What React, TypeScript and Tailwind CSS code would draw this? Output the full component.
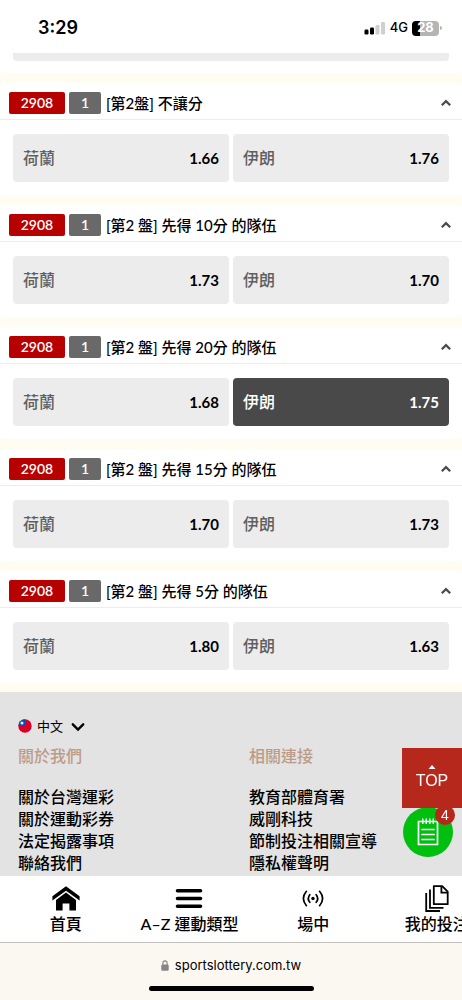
import { useState } from 'react';
import clsx from 'clsx';

interface Market {
  id: number;
  title: string;
  odds: [string, string];
}

const teams = ['荷蘭', '伊朗'];

const markets: Market[] = [
  { id: 1, title: '[第2盤] 不讓分', odds: ['1.66', '1.76'] },
  { id: 2, title: '[第2 盤] 先得 10分 的隊伍', odds: ['1.73', '1.70'] },
  { id: 3, title: '[第2 盤] 先得 20分 的隊伍', odds: ['1.68', '1.75'] },
  { id: 4, title: '[第2 盤] 先得 15分 的隊伍', odds: ['1.70', '1.73'] },
  { id: 5, title: '[第2 盤] 先得 5分 的隊伍', odds: ['1.80', '1.63'] },
];

const footerColumns = [
  { heading: '關於我們', links: ['關於台灣運彩', '關於運動彩券', '法定揭露事項', '聯絡我們'] },
  { heading: '相關連接', links: ['教育部體育署', '威剛科技', '節制投注相關宣導', '隱私權聲明'] },
];

function StatusBar() {
  return (
    <header className="flex h-[53px] items-start justify-between bg-white pt-4 pr-5 pl-[38px] font-['Inter','Liberation_Sans',sans-serif]">
      <span className="text-lg leading-6 font-semibold">3:29</span>
      <div className="flex h-6 items-center gap-1">
        <svg width="22" height="14" viewBox="0 0 22 14" aria-hidden="true">
          <rect x="0.5" y="8.5" width="4" height="5" rx="1.2" fill="#000" />
          <rect x="6" y="6.5" width="4" height="7" rx="1.2" fill="#000" />
          <rect x="11.5" y="4" width="4" height="9.500" rx="1.2" fill="#cfcfcf" />
          <rect x="17" y="1" width="4" height="12.500" rx="1.2" fill="#cfcfcf" />
        </svg>
        <span className="text-[13px] font-medium">4G</span>
        <div className="flex items-center gap-px">
          <span className="flex h-[15px] w-[27px] items-center justify-center rounded bg-linear-to-r from-black from-28% to-[#b4b4b4] to-28% text-[13px] font-bold text-white">
            28
          </span>
          <span className="h-1 w-0.5 rounded-r bg-[#b4b4b4]" />
        </div>
      </div>
    </header>
  );
}

function MarketCard({
  market,
  selected,
  onSelect,
}: {
  market: Market;
  selected: number | null;
  onSelect: (index: number) => void;
}) {
  const [open, setOpen] = useState(true);

  return (
    <section className="rounded bg-white">
      <button
        onClick={() => setOpen(!open)}
        aria-expanded={open}
        className="flex h-[37px] w-full items-center border-b border-[#ececf0] pt-1 pr-[11px] pl-[9px] text-left"
      >
        <span className="flex h-[22px] w-14 items-center justify-center rounded-xs bg-[#b70000] text-sm font-semibold text-white">
          2908
        </span>
        <span className="ml-1 flex h-[22px] w-8 items-center justify-center rounded-xs bg-[#696969] text-sm font-semibold text-white">
          1
        </span>
        <span className="ml-[5px] flex-1 text-[15px] leading-6 font-medium">{market.title}</span>
        <svg
          width="10"
          height="8"
          viewBox="0 0 10 8"
          fill="none"
          stroke="#4a4a4a"
          strokeWidth="2.2"
          className={clsx(!open && 'rotate-180')}
          aria-hidden="true"
        >
          <path d="M0.800 6.300 5 2.100 9.200 6.300" />
        </svg>
      </button>

      {open && (
        <div className="grid grid-cols-2 gap-1 px-[13px] pt-3.5 pb-[13px]">
          {teams.map((team, i) => (
            <button
              key={team}
              onClick={() => onSelect(i)}
              aria-pressed={selected === i}
              className={clsx(
                'flex h-12 items-center justify-between rounded px-2.5',
                selected === i ? 'bg-[#494949] text-white' : 'bg-[#ececec]'
              )}
            >
              <span className={clsx('text-base font-medium', selected !== i && 'text-[#606060]')}>{team}</span>
              <span className="text-[15px] font-bold">{market.odds[i]}</span>
            </button>
          ))}
        </div>
      )}
    </section>
  );
}

function LanguageSelect() {
  return (
    <div className="flex h-5 items-center">
      <svg width="14" height="14" viewBox="0 0 14 14" aria-hidden="true">
        <circle cx="7" cy="7" r="6.700" fill="#d80027" />
        <path d="M0.300 7A6.700 6.700 0 0 1 7 0.300V7Z" fill="#0052b4" />
        <circle cx="4" cy="4.100" r="1.500" fill="#e8f0ff" />
      </svg>
      <div className="relative ml-[5px] flex">
        <select
          aria-label="語言"
          className="appearance-none bg-transparent pr-[21px] font-['Noto_Sans_CJK_TC',sans-serif] text-[13px] leading-5"
        >
          <option>中文</option>
        </select>
        <svg
          width="14"
          height="10"
          viewBox="0 0 14 10"
          fill="none"
          stroke="#000"
          strokeWidth="2.4"
          strokeLinecap="round"
          className="pointer-events-none absolute top-1.5 right-0"
          aria-hidden="true"
        >
          <path d="M1.800 2.300 7 7.500 12.200 2.300" />
        </svg>
      </div>
    </div>
  );
}

function SiteFooter() {
  return (
    <footer className="flex-1 bg-[#e3e3e3] px-[18px] pt-6 pb-0.5">
      <LanguageSelect />
      <div className="mt-2 grid grid-cols-[231px_1fr]">
        {footerColumns.map((column) => (
          <div key={column.heading}>
            <h2 className="leading-6 font-medium text-[#bc9b88]">{column.heading}</h2>
            <ul className="mt-[18px] leading-[22px] font-medium">
              {column.links.map((link) => (
                <li key={link}>
                  <a href="#">{link}</a>
                </li>
              ))}
            </ul>
          </div>
        ))}
      </div>
    </footer>
  );
}

function FloatingActions({ count }: { count: number }) {
  return (
    <div className="fixed right-0 bottom-[143px] flex w-[60px] flex-col font-['Liberation_Sans',sans-serif]">
      <button
        onClick={() => window.scrollTo({ top: 0 })}
        className="z-10 flex h-[60px] flex-col items-center bg-[#b6271c] pt-[17px] text-white"
      >
        <svg width="8" height="4" viewBox="0 0 8 4" aria-hidden="true">
          <path d="M4 0 7.500 4H0.500Z" fill="#fff" />
        </svg>
        <span className="text-base leading-6">TOP</span>
      </button>
      <button
        aria-label="投注單"
        className="relative -mt-px ml-px flex size-[50px] items-center justify-center rounded-full bg-[#00bf0f]"
      >
        <svg width="22" height="28" viewBox="0 0 22 28" fill="none" stroke="#fff" strokeWidth="1.7" aria-hidden="true">
          <path d="M1.500 3.500H20.500V26.500H1.500Z" />
          <path d="M5.800 0.500V6M9.300 0.500V6M12.800 0.500V6M16.300 0.500V6" strokeWidth="1.400" />
          <path d="M5 11.500H17M5 16.500H17M5 21.500H17" strokeLinecap="round" />
        </svg>
        <span className="absolute -top-0.5 -right-0.5 flex size-5 items-center justify-center rounded-full bg-[#b6271c] text-sm text-white">
          {count}
        </span>
      </button>
    </div>
  );
}

function HomeIcon() {
  return (
    <svg width="28" height="25" viewBox="0 0 28 25" aria-hidden="true">
      <path d="M14 0.300 27.600 10.200V14.600L14 4.700 0.400 14.600V10.200Z" fill="#000" />
      <path d="M14 6.600 24 13.900V24.500H17.400V17.500H10.600V24.500H4V13.900Z" fill="#000" />
    </svg>
  );
}

function MenuIcon() {
  return (
    <svg width="28" height="25" viewBox="0 0 28 25" stroke="#000" strokeWidth="3.600" strokeLinecap="round" aria-hidden="true">
      <path d="M2.500 4.800H25.500M2.500 12.500H25.500M2.500 20.200H25.500" />
    </svg>
  );
}

function LiveIcon() {
  return (
    <svg width="22" height="25" viewBox="0 0 22 25" fill="none" stroke="#000" strokeWidth="1.700" strokeLinecap="round" aria-hidden="true">
      <circle cx="11" cy="12.500" r="1.700" fill="#000" stroke="none" />
      <path d="M7.800 8.700Q4.800 12.500 7.800 16.300M14.200 8.700Q17.200 12.500 14.200 16.300" />
      <path d="M4.400 5.300Q-1.600 12.500 4.400 19.700M17.600 5.300Q23.600 12.500 17.600 19.700" />
    </svg>
  );
}

function BetsIcon() {
  return (
    <svg width="24" height="27" viewBox="0 0 24 27" fill="none" stroke="#000" strokeWidth="1.800" aria-hidden="true">
      <path d="M8.800 1.200H17.200L22.700 6.700V19.200H8.800Z" strokeLinejoin="round" />
      <path d="M16.400 1.500V7.600H22.500" />
      <path d="M5 4.500V22.800H18.500" />
      <path d="M1.200 8V26H15" />
    </svg>
  );
}

const tabs = [
  { label: '首頁', Icon: HomeIcon },
  { label: 'A–Z 運動類型', Icon: MenuIcon },
  { label: '場中', Icon: LiveIcon },
  { label: '我的投注', Icon: BetsIcon },
];

function BottomBar() {
  return (
    <div className="sticky bottom-0">
      <nav className="flex overflow-x-auto overflow-y-hidden border-b border-[#c4c0bb] bg-white pl-1 [scrollbar-width:none]">
        {tabs.map(({ label, Icon }) => (
          <a
            key={label}
            href="#"
            className="flex h-[66px] w-[27%] shrink-0 flex-col items-center pt-2 font-medium whitespace-nowrap"
          >
            <span className="flex h-7 items-center">
              <Icon />
            </span>
            <span className="leading-6">{label}</span>
          </a>
        ))}
      </nav>
      <div className="flex h-[57px] flex-col items-center justify-between bg-[#fbf8f1] pt-3 pb-[9px] font-['Inter','Liberation_Sans',sans-serif]">
        <div className="flex items-center gap-1.5 text-[13px] leading-5">
          <svg width="8" height="11" viewBox="0 0 8 11" aria-hidden="true">
            <rect x="0.300" y="4.600" width="7.400" height="6.200" rx="1.200" fill="#858585" />
            <path d="M1.900 5V3A2.100 2.100 0 0 1 6.100 3V5" fill="none" stroke="#858585" strokeWidth="1.100" />
          </svg>
          sportslottery.com.tw
        </div>
        <div className="h-[5px] w-[165px] rounded-full bg-black" />
      </div>
    </div>
  );
}

export default function App() {
  const [picks, setPicks] = useState<Record<number, number | null>>({ 3: 1 });

  function handleSelect(id: number, index: number) {
    setPicks((prev) => ({ ...prev, [id]: prev[id] === index ? null : index }));
  }

  return (
    <div className="flex min-h-screen flex-col bg-[#fffcf2] font-['Lato','Noto_Sans_CJK_TC',sans-serif] text-base text-black">
      <StatusBar />
      <main className="flex flex-col gap-2.5 pb-[9px]">
        {/* Tail of the market scrolled under the status bar */}
        <div className="rounded-b bg-white px-[13px] pb-3">
          <div className="h-2 rounded-b bg-[#ececec]" />
        </div>
        {markets.map((market) => (
          <MarketCard
            key={market.id}
            market={market}
            selected={picks[market.id] ?? null}
            onSelect={(index) => handleSelect(market.id, index)}
          />
        ))}
      </main>
      <SiteFooter />
      <BottomBar />
      <FloatingActions count={4} />
    </div>
  );
}
